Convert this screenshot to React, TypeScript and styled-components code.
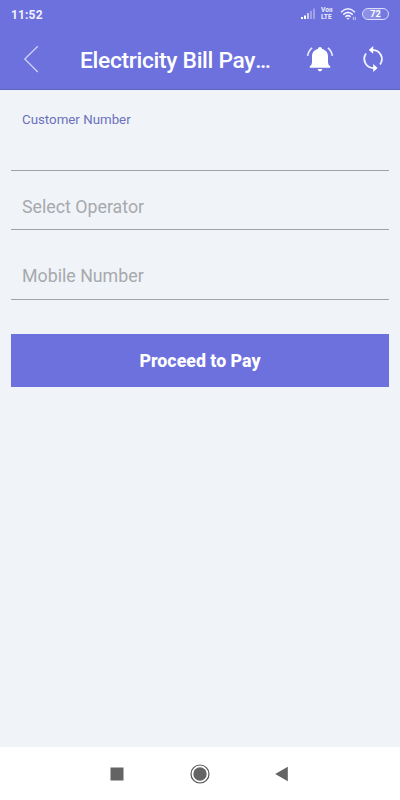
import React from "react";
import styled, { createGlobalStyle } from "styled-components";

const GlobalStyle = createGlobalStyle`
  * { box-sizing: border-box; }
  body { margin: 0; font-family: Roboto, "Liberation Sans", sans-serif; }
`;

const Screen = styled.div`
  display: flex;
  flex-direction: column;
  width: 400px;
  height: 800px;
  overflow: hidden;
  background: #f0f4f8;
`;

const Header = styled.header`
  height: 90px;
  flex: none;
  color: #fff;
  background: #6c71de;
  border-bottom: 1px solid #5f63bb;
`;

const StatusBar = styled.div`
  display: flex;
  align-items: center;
  justify-content: space-between;
  height: 28px;
  padding: 0 11px 0 11px;
`;

const Clock = styled.span`
  padding-top: 2px;
  font-size: 12px;
  font-weight: 700;
  line-height: 14px;
  letter-spacing: 0.15px;
  color: #f1f1ff;
`;

const StatusIcons = styled.div`
  display: flex;
  align-items: center;
  height: 16px;
`;

const SignalIcon = styled.svg`
  width: 15px;
  height: 12px;
  margin-right: 6px;
`;

const VolteLabel = styled.div`
  display: flex;
  flex-direction: column;
  width: 13px;
  margin-right: 6px;
  font-size: 6.6px;
  font-weight: 700;
  line-height: 7px;
  color: #f0f0ff;
  white-space: nowrap;
`;

const VolteLine = styled.span`
  display: block;
  height: 7px;
  overflow: hidden;
`;

const WifiIcon = styled.svg`
  width: 17px;
  height: 14px;
  margin-right: 5px;
`;

const Battery = styled.div`
  display: flex;
  align-items: center;
  justify-content: center;
  width: 27px;
  height: 12px;
  border: 1.5px solid #dcdcf8;
  border-radius: 6px;
  background: linear-gradient(90deg, #8b8fe5 72%, #7579df 72%);
  font-size: 9px;
  font-weight: 700;
  line-height: 9px;
`;

const Toolbar = styled.div`
  display: flex;
  align-items: center;
  height: 61px;
  padding-left: 23px;
`;

const IconButton = styled.button<{ $width: number }>`
  display: flex;
  flex: none;
  width: ${(p) => p.$width}px;
  height: 48px;
  padding: 0;
  align-items: center;
  justify-content: flex-start;
  border: 0;
  color: inherit;
  background: none;
`;

const Title = styled.h1`
  flex: none;
  width: 225px;
  margin: 4px 0 0;
  font-size: 22.8px;
  font-weight: 500;
  line-height: 28px;
  letter-spacing: -0.32px;
  white-space: nowrap;
`;

const Ellipsis = styled.span`
  letter-spacing: -1.6px;
`;

const Form = styled.form`
  flex: 1;
  padding: 0 11px;
`;

const Field = styled.div<{ $height: number; $top: number; $active?: boolean }>`
  height: ${(p) => p.$height}px;
  padding: ${(p) => p.$top}px 11px 0;
  border-bottom: 1px solid #a0a3a8;
  font-size: ${(p) => (p.$active ? 13.3 : 17.8)}px;
  line-height: ${(p) => (p.$active ? 16 : 22)}px;
  color: ${(p) => (p.$active ? "#6c70bd" : "#a7a9ad")};
`;

const PayButton = styled.button`
  display: block;
  width: 100%;
  height: 53px;
  margin-top: 34px;
  padding: 1px 0 0;
  border: 0;
  color: #fff;
  background: #6c71de;
  font: 800 17.8px/22px Roboto, "Liberation Sans", sans-serif;
`;

const NavBar = styled.nav`
  display: flex;
  flex: none;
  align-items: center;
  justify-content: center;
  gap: 63px;
  height: 53px;
  background: #fff;
`;

const NavIcon = styled.svg`
  width: 20px;
  height: 20px;
  fill: #646464;
`;

export default function App() {
  return (
    <Screen>
      <GlobalStyle />
      <Header>
        <StatusBar>
          <Clock>11:52</Clock>
          <StatusIcons>
            <SignalIcon viewBox="0 0 15 12" fill="#fff">
              <rect x="1" y="9" width="2" height="2" />
              <rect x="4" y="7.5" width="2" height="3.5" />
              <rect x="7" y="5" width="2" height="6" opacity=".65" />
              <rect x="10" y="2.8" width="2" height="8.2" opacity=".35" />
              <rect x="13" y="0.5" width="2" height="10.5" opacity=".35" />
            </SignalIcon>
            <VolteLabel>
              <VolteLine>Voıı</VolteLine>
              <VolteLine>LTE</VolteLine>
            </VolteLabel>
            <WifiIcon viewBox="0 0 17 14" fill="none" stroke="#f1f1ff" strokeWidth="1.6">
              <path d="M1 5.2Q8 -1.7 15 5.2M3.2 7.6Q8 3 12.8 7.6M5.4 9.9Q8 7.5 10.6 9.9" />
              <path d="M6.4 11L8 12.8L9.6 11Z" fill="#f1f1ff" stroke="none" />
              <path d="M13.4 9.8V13M15.3 9.8V13" strokeWidth="1" opacity=".7" />
            </WifiIcon>
            <Battery>72</Battery>
          </StatusIcons>
        </StatusBar>
        <Toolbar>
          <IconButton $width={57} type="button" aria-label="Back">
            <svg width="16" height="28" viewBox="0 0 16 28" fill="none" stroke="#d3d4f7" strokeWidth="1.25">
              <path d="M14.8 1.2L1.8 14L14.8 27" />
            </svg>
          </IconButton>
          <Title>
            Electricity Bill Pay<Ellipsis>...</Ellipsis>
          </Title>
          <IconButton $width={56} type="button" aria-label="Notifications">
            <svg width="30" height="28" viewBox="0 0 30 28" fill="none">
              <path
                d="M15 2C13.8 2 13 2.8 13 4C9.2 4.7 7 7.6 7 11.2V17.5Q7 19.8 4.8 21.2V22.7H25.2V21.2Q23 19.8 23 17.5V11.2C23 7.6 20.8 4.7 17 4C17 2.8 16.2 2 15 2Z"
                fill="#fff"
              />
              <path d="M12.7 24H17.3Q16.9 26.4 15 26.4T12.7 24Z" fill="#fff" />
              <path d="M7.1 2.8Q3.4 5.7 2.6 10.9M22.9 2.8Q26.6 5.7 27.4 10.9" stroke="#e9e9fc" strokeWidth="1.7" />
            </svg>
          </IconButton>
          <IconButton $width={24} type="button" aria-label="Refresh">
            <svg width="24" height="28" viewBox="0 0 24 28" fill="none" stroke="#f3f3ff" strokeWidth="1.8">
              <path d="M11.4 4.9C19.6 5.3 23.3 13.2 19.1 19.4M5 8.6C.8 14.8 4.8 22.9 12.8 23" />
              <path d="M7.8 4.9L12.2 1V8.8ZM16.6 23L12.2 19.1V26.9Z" fill="#fff" stroke="none" />
            </svg>
          </IconButton>
        </Toolbar>
      </Header>
      <Form>
        <Field $height={81} $top={22} $active>Customer Number</Field>
        <Field $height={59} $top={25}>Select Operator</Field>
        <Field $height={70} $top={35}>Mobile Number</Field>
        <PayButton type="button">Proceed to Pay</PayButton>
      </Form>
      <NavBar>
        <NavIcon viewBox="0 0 20 20">
          <rect x="3.5" y="3.5" width="13" height="13" />
        </NavIcon>
        <NavIcon viewBox="0 0 20 20">
          <circle cx="10" cy="10" r="9" fill="none" stroke="#555" strokeWidth="1.2" />
          <circle cx="10" cy="10" r="6.7" />
        </NavIcon>
        <NavIcon viewBox="0 0 20 20">
          <path d="M2.2 10L14.8 2.8V17.2Z" />
        </NavIcon>
      </NavBar>
    </Screen>
  );
}
